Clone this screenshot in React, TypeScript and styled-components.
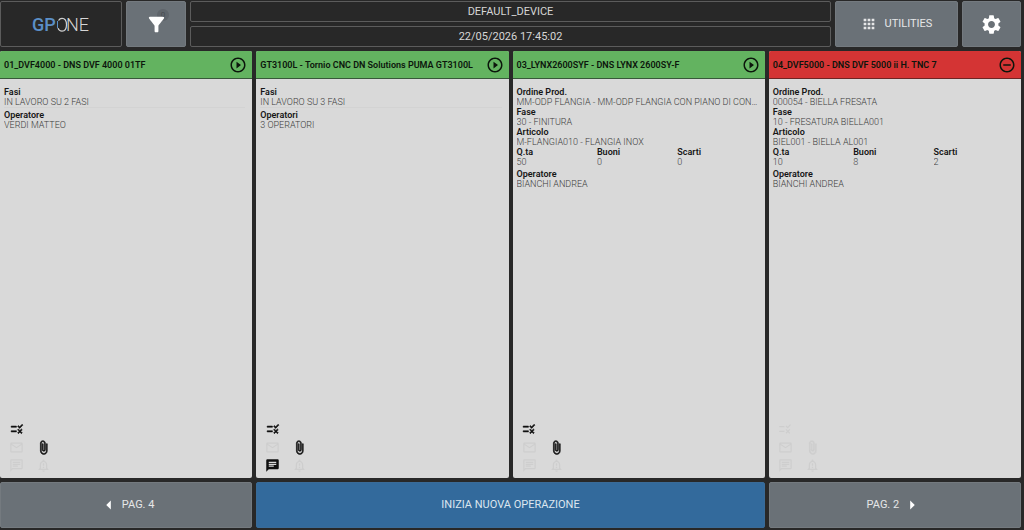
import React from 'react';
import styled, { createGlobalStyle, css } from 'styled-components';
import {
  MdApps,
  MdArrowLeft,
  MdArrowRight,
  MdAttachFile,
  MdChat,
  MdFilterAlt,
  MdMailOutline,
  MdOutlineChat,
  MdPlayCircleOutline,
  MdRemoveCircleOutline,
  MdRule,
  MdSettings,
} from 'react-icons/md';

const GlobalStyle = createGlobalStyle`
  *, *::before, *::after { box-sizing: border-box; }
  body {
    margin: 0;
    background: #282828;
    font-family: Roboto, "Liberation Sans", sans-serif;
  }
  button { font-family: inherit; cursor: pointer; }
`;

const Page = styled.div`
  display: flex;
  flex-direction: column;
  gap: 4px;
  min-height: 100vh;
  padding: 1px 3px 2px 0;
`;

const TopBar = styled.header`
  display: grid;
  grid-template-columns: 122px 60px minmax(0, 1fr) 123px 59px;
  gap: 4px;
  height: 46px;
`;

const outlined = css`
  border: 1px solid #5c5c5c;
  border-radius: 2px;
  background: #282828;
`;

const Logo = styled.div`
  ${outlined}
  display: flex;
  align-items: center;
  justify-content: center;
`;

const BarButton = styled.button<{ $primary?: boolean; $gap?: number }>`
  position: relative;
  display: flex;
  align-items: center;
  justify-content: center;
  gap: ${(p) => p.$gap ?? 8}px;
  padding: 0;
  border: 1px solid ${(p) => (p.$primary ? '#3a6b98' : '#747a7f')};
  border-radius: 2px;
  background: ${(p) => (p.$primary ? '#336a9c' : '#6a7177')};
  color: ${(p) => (p.$primary ? '#dce6ef' : '#e6e7e8')};
  font-size: 11px;
  line-height: 16px;
`;

const FilterCount = styled.span`
  position: absolute;
  top: 7px;
  right: 16px;
  width: 12px;
  height: 12px;
  border-radius: 50%;
  background: #5f656b;
  color: #484d52;
  font-size: 8px;
  line-height: 12px;
  text-align: center;
`;

const FilterIcon = styled(MdFilterAlt)`
  position: relative;
  color: #fff;
`;

const StatusColumn = styled.div`
  display: flex;
  flex-direction: column;
  gap: 4px;
`;

const StatusLine = styled.div`
  ${outlined}
  flex: 1;
  display: flex;
  align-items: center;
  justify-content: center;
  color: #d6d6d6;
  font-size: 11px;
  line-height: 14px;
`;

const Machines = styled.main`
  flex: 1;
  display: grid;
  grid-template-columns: repeat(4, minmax(0, 1fr));
  gap: 4px;
`;

const Card = styled.article`
  display: flex;
  flex-direction: column;
  border-radius: 2px;
  overflow: hidden;
  background: #d9d9d9;
`;

const CardHeader = styled.header<{ $stopped?: boolean }>`
  display: flex;
  align-items: center;
  justify-content: space-between;
  height: 28px;
  padding: 0 5px 0 4px;
  border-bottom: 1px solid ${(p) => (p.$stopped ? '#6e2524' : '#38593a')};
  background: ${(p) => (p.$stopped ? '#d43434' : '#63b360')};
  color: #0c160c;
`;

const CardTitle = styled.h2`
  margin: 0;
  font-size: 9px;
  font-weight: 600;
  line-height: 12px;
  white-space: nowrap;
`;

const Details = styled.dl`
  flex: 1;
  margin: 0;
  padding: 8px 7px 0 4px;
  font-size: 9px;
  line-height: 10px;
`;

const Field = styled.div<{ $ruled?: boolean }>`
  ${(p) =>
    p.$ruled &&
    css`
      margin-bottom: 2px;
      border-bottom: 1px solid #d3d3d3;
    `}
`;

const Label = styled.dt`
  color: #161616;
  font-weight: 600;
`;

const Value = styled.dd`
  margin: 0;
  overflow: hidden;
  color: #3c3c3c;
  font-weight: 300;
  text-overflow: ellipsis;
  white-space: nowrap;
`;

const Quantities = styled.div`
  display: grid;
  grid-template-columns: repeat(3, 1fr);
  margin-bottom: 2px;
`;

const Flags = styled.div`
  display: grid;
  grid-template-columns: repeat(2, 27px);
  grid-auto-rows: 18px;
  align-items: center;
  justify-items: center;
  padding: 0 0 4px 3px;
`;

const Flag = styled.span<{ $on?: boolean; $bold?: boolean }>`
  display: flex;
  color: ${(p) => (p.$on ? '#101010' : '#cecece')};

  svg {
    stroke-width: ${(p) => (p.$bold ? 1 : 0)};
  }

  path[fill='none'] {
    stroke: none;
  }
`;

const Footer = styled.nav`
  display: grid;
  grid-template-columns: repeat(4, minmax(0, 1fr));
  gap: 4px;
  height: 46px;
`;

const StartButton = styled(BarButton)`
  grid-column: span 2;
`;

type Item = [label: string, value: string];

interface Machine {
  title: string;
  stopped?: boolean;
  ruled?: boolean;
  fields: Item[];
  quantities?: Item[];
  operator: Item;
  rule: boolean;
  attachment: boolean;
  chat: boolean;
}

const machines: Machine[] = [
  {
    title: '01_DVF4000 - DNS DVF 4000 01TF',
    ruled: true,
    fields: [['Fasi', 'IN LAVORO SU 2 FASI']],
    operator: ['Operatore', 'VERDI MATTEO'],
    rule: true,
    attachment: true,
    chat: false,
  },
  {
    title: 'GT3100L - Tornio CNC DN Solutions PUMA GT3100L',
    ruled: true,
    fields: [['Fasi', 'IN LAVORO SU 3 FASI']],
    operator: ['Operatori', '3 OPERATORI'],
    rule: true,
    attachment: true,
    chat: true,
  },
  {
    title: '03_LYNX2600SYF - DNS LYNX 2600SY-F',
    fields: [
      ['Ordine Prod.', 'MM-ODP FLANGIA - MM-ODP FLANGIA CON PIANO DI CON...'],
      ['Fase', '30 - FINITURA'],
      ['Articolo', 'M-FLANGIA010 - FLANGIA INOX'],
    ],
    quantities: [['Q.ta', '50'], ['Buoni', '0'], ['Scarti', '0']],
    operator: ['Operatore', 'BIANCHI ANDREA'],
    rule: true,
    attachment: true,
    chat: false,
  },
  {
    title: '04_DVF5000 - DNS DVF 5000 ii H. TNC 7',
    stopped: true,
    fields: [
      ['Ordine Prod.', '000054 - BIELLA FRESATA'],
      ['Fase', '10 - FRESATURA BIELLA001'],
      ['Articolo', 'BIEL001 - BIELLA AL001'],
    ],
    quantities: [['Q.ta', '10'], ['Buoni', '8'], ['Scarti', '2']],
    operator: ['Operatore', 'BIANCHI ANDREA'],
    rule: false,
    attachment: false,
    chat: false,
  },
];

function Entry({ item, ruled }: { item: Item; ruled?: boolean }) {
  return (
    <Field $ruled={ruled}>
      <Label>{item[0]}</Label>
      <Value>{item[1]}</Value>
    </Field>
  );
}

function AlertBell() {
  return (
    <svg width="15" height="15" viewBox="0 0 24 24" fill="currentColor" aria-hidden="true">
      <path d="M12 22c1.100 0 2-.9 2-2h-4c0 1.100.9 2 2 2zm6-6v-5c0-3.070-1.630-5.640-4.500-6.320V4c0-.83-.67-1.500-1.500-1.500s-1.500.67-1.500 1.500v.68C7.640 5.360 6 7.920 6 11v5l-2 2v1h16v-1l-2-2zm-2 1H8v-6c0-2.480 1.510-4.500 4-4.500s4 2.020 4 4.500v6z" />
      <path d="M11 8.500h2v4h-2zM11 14h2v2h-2z" />
    </svg>
  );
}

function MachineCard({ machine }: { machine: Machine }) {
  return (
    <Card>
      <CardHeader $stopped={machine.stopped}>
        <CardTitle>{machine.title}</CardTitle>
        {machine.stopped ? <MdRemoveCircleOutline size={18} /> : <MdPlayCircleOutline size={18} />}
      </CardHeader>
      <Details>
        {machine.fields.map((item) => (
          <Entry key={item[0]} item={item} ruled={machine.ruled} />
        ))}
        {machine.quantities && (
          <Quantities>
            {machine.quantities.map((item) => (
              <Entry key={item[0]} item={item} />
            ))}
          </Quantities>
        )}
        <Entry item={machine.operator} />
      </Details>
      <Flags>
        <Flag $on={machine.rule} $bold={machine.rule}><MdRule size={14} /></Flag>
        <span />
        <Flag><MdMailOutline size={15} /></Flag>
        <Flag $on={machine.attachment} $bold><MdAttachFile size={15} /></Flag>
        <Flag $on={machine.chat}>
          {machine.chat ? <MdChat size={15} /> : <MdOutlineChat size={15} />}
        </Flag>
        <Flag><AlertBell /></Flag>
      </Flags>
    </Card>
  );
}

function Brand() {
  return (
    <svg width="60" height="22" viewBox="0 0 60 22" role="img" aria-label="GP ONE">
      <text x="1" y="18" fill="#5b8fc7" fontFamily="Roboto" fontSize="18" fontWeight="500">GP</text>
      <path d="M26.500 8v7" stroke="#5b8fc7" strokeWidth="1" />
      <path
        d="M27.500 7.500C28.500 5.800 29.800 5.300 31 5.300c2.900 0 4.500 2.400 4.500 6.400s-1.600 6.400-4.500 6.400c-1.900 0-3.300-1-4-3"
        fill="none"
        stroke="#d0d0d0"
        strokeWidth="1.200"
      />
      <text x="35" y="18" fill="#d6d6d6" fontFamily="Roboto" fontSize="18" fontWeight="300">NE</text>
    </svg>
  );
}

export default function App() {
  return (
    <>
      <GlobalStyle />
      <Page>
        <TopBar>
          <Logo><Brand /></Logo>
          <BarButton type="button" aria-label="Filter">
            <FilterCount>0</FilterCount>
            <FilterIcon size={23} />
          </BarButton>
          <StatusColumn>
            <StatusLine>DEFAULT_DEVICE</StatusLine>
            <StatusLine>22/05/2026 17:45:02</StatusLine>
          </StatusColumn>
          <BarButton type="button"><MdApps size={16} />UTILITIES</BarButton>
          <BarButton type="button" aria-label="Settings"><MdSettings size={23} color="#fff" /></BarButton>
        </TopBar>
        <Machines>
          {machines.map((machine) => (
            <MachineCard key={machine.title} machine={machine} />
          ))}
        </Machines>
        <Footer>
          <BarButton type="button" $gap={2}><MdArrowLeft size={22} color="#fff" />PAG. 4</BarButton>
          <StartButton type="button" $primary>INIZIA NUOVA OPERAZIONE</StartButton>
          <BarButton type="button" $gap={2}>PAG. 2<MdArrowRight size={22} color="#fff" /></BarButton>
        </Footer>
      </Page>
    </>
  );
}
